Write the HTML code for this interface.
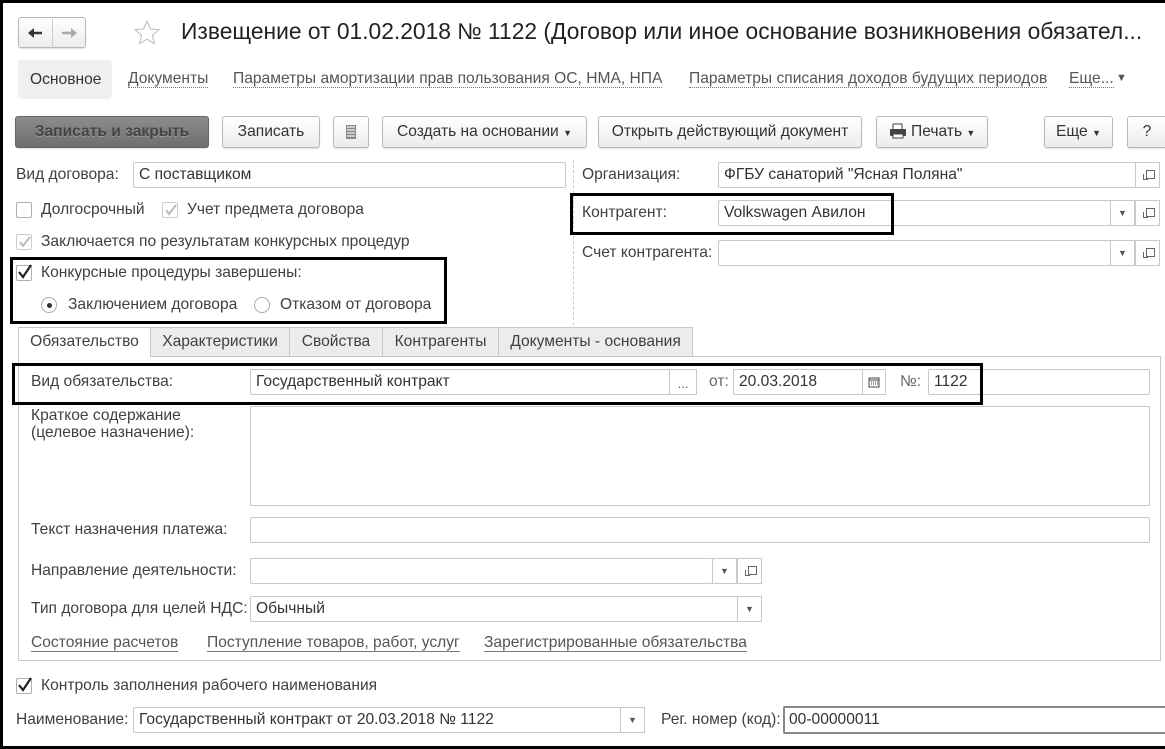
<!DOCTYPE html>
<html><head><meta charset="utf-8">
<style>
*{box-sizing:border-box;margin:0;padding:0}
body{width:1165px;height:749px;overflow:hidden;background:#fff;font-family:"Liberation Sans",Arial,sans-serif;font-size:15.6px;color:#404040;position:relative}
.a{position:absolute;white-space:nowrap}
.frame{position:absolute;left:0;top:0;width:1168px;height:749px;border:3px solid #000;border-right:none}
.inp{position:absolute;border:1px solid #c8c8c8;border-radius:2px;background:#fff;height:26px;line-height:24px;padding-left:5px;color:#333;white-space:nowrap;overflow:hidden}
.btn{position:absolute;border:1px solid #b8b8b8;border-radius:3px;background:linear-gradient(#fff,#ececec);height:32px;line-height:30px;text-align:center;color:#333;white-space:nowrap;box-shadow:0 1px 1px rgba(0,0,0,.12)}
.dd{position:absolute;width:25px;height:26px;border:1px solid #c8c8c8;background:#fff;font-size:9px;line-height:24px;text-align:center;color:#555}
.cp{position:absolute;width:25px;height:26px;border:1px solid #c8c8c8;background:#fff}
.cp:before{content:"";position:absolute;left:10px;top:7px;width:7px;height:7px;border:1px solid #666;background:#fff}
.cp:after{content:"";position:absolute;left:7px;top:11px;width:4px;height:5px;border-left:1px solid #666;border-bottom:1px solid #666}
.cb{position:absolute;width:16px;height:16px;border:1px solid #b0b0b0;border-radius:2px;background:#fff}
.blk{position:absolute;border:3px solid #000}
.lnk{position:absolute;white-space:nowrap;color:#555;border-bottom:1px solid #777;line-height:16px}
.dl{position:absolute;white-space:nowrap;color:#555;border-bottom:1px dotted #777;line-height:16px}
.tab{position:absolute;top:327px;height:30px;border:1px solid #c8c8c8;background:#ececec;line-height:28px;text-align:center;color:#404040}
</style></head><body>
<div class="frame"></div>

<div class="btn" style="left:18px;top:17px;width:68px;height:31px"></div>
<div class="a" style="left:52px;top:19px;width:1px;height:27px;background:#ccc"></div>
<svg class="a" style="left:26px;top:26px" width="20" height="14"><path d="M3 7h13" stroke="#333" stroke-width="2.5"/><path d="M2 7l6-5v10z" fill="#333"/></svg>
<svg class="a" style="left:59px;top:26px" width="20" height="14"><path d="M3 7h13" stroke="#aaa" stroke-width="2.5"/><path d="M18 7l-6-5v10z" fill="#aaa"/></svg>
<svg class="a" style="left:133px;top:19px" width="28" height="28"><path d="M14 2l3.4 8 8.6.7-6.6 5.6 2 8.4L14 20.2 6.6 24.7l2-8.4L2 10.7l8.6-.7z" fill="none" stroke="#bbb" stroke-width="1"/></svg>
<div class="a" style="left:181px;top:18px;font-size:22.8px;color:#222">Извещение от 01.02.2018 № 1122 (Договор или иное основание возникновения обязател...</div>

<div class="a" style="left:18px;top:60px;width:94px;height:39px;background:#efefef;border-radius:4px"></div>
<div class="a" style="left:30px;top:71px;color:#333">Основное</div>
<div class="dl" style="left:128px;top:71px">Документы</div>
<div class="dl" style="left:233px;top:71px">Параметры амортизации прав пользования ОС, НМА, НПА</div>
<div class="dl" style="left:689px;top:71px">Параметры списания доходов будущих периодов</div>
<div class="dl" style="left:1069px;top:71px">Еще...</div>
<div class="a" style="left:1116px;top:72px;font-size:11px;color:#555">▼</div>

<div class="btn" style="left:15px;top:116px;width:194px;background:linear-gradient(#8d8d8d,#6e6e6e);border-color:#666;color:#444;font-weight:bold;text-shadow:0 1px 0 #999">Записать и закрыть</div>
<div class="btn" style="left:222px;top:116px;width:98px">Записать</div>
<div class="btn" style="left:333px;top:116px;width:36px"><div style="position:absolute;left:12px;top:8px;width:10px;height:14px;border:1px solid #888;background:repeating-linear-gradient(#ccc 0 2px,#888 2px 3px)"></div></div>
<div class="btn" style="left:382px;top:116px;width:205px">Создать на основании <span style="font-size:9px">▼</span></div>
<div class="btn" style="left:598px;top:116px;width:264px">Открыть действующий документ</div>
<div class="btn" style="left:876px;top:116px;width:112px"><svg style="vertical-align:-3px" width="18" height="16"><rect x="4" y="1" width="9" height="6" fill="#fff" stroke="#444"/><rect x="1" y="6" width="16" height="7" rx="1" fill="#444"/><rect x="4" y="11" width="10" height="4" fill="#fff" stroke="#444"/></svg> Печать <span style="font-size:9px">▼</span></div>
<div class="btn" style="left:1044px;top:116px;width:69px">Еще <span style="font-size:9px">▼</span></div>
<div class="btn" style="left:1127px;top:116px;width:40px">?</div>

<div class="a" style="left:16px;top:166px">Вид договора:</div>
<div class="inp" style="left:133px;top:162px;width:433px">С поставщиком</div>
<div class="cb" style="left:16px;top:202px"></div>
<div class="a" style="left:41px;top:201px">Долгосрочный</div>
<div class="cb" style="left:162px;top:202px;border-color:#ccc"></div>
<svg class="a" style="left:164px;top:203px" width="14" height="14"><path d="M2 7l3 4 7-9" stroke="#bbb" stroke-width="2" fill="none"/></svg>
<div class="a" style="left:187px;top:201px">Учет предмета договора</div>
<div class="cb" style="left:16px;top:234px;border-color:#ccc"></div>
<svg class="a" style="left:18px;top:235px" width="14" height="14"><path d="M2 7l3 4 7-9" stroke="#bbb" stroke-width="2" fill="none"/></svg>
<div class="a" style="left:41px;top:233px">Заключается по результатам конкурсных процедур</div>
<div class="blk" style="left:10px;top:257px;width:437px;height:67px"></div>
<div class="cb" style="left:16px;top:265px"></div>
<svg class="a" style="left:17px;top:264px" width="16" height="16"><path d="M2 8l4 5 8-12" stroke="#222" stroke-width="2.2" fill="none"/></svg>
<div class="a" style="left:41px;top:264px">Конкурсные процедуры завершены:</div>
<div class="a" style="left:41px;top:297px;width:16px;height:16px;border:1px solid #aaa;border-radius:50%"></div>
<div class="a" style="left:47px;top:303px;width:5px;height:5px;background:#333;border-radius:50%"></div>
<div class="a" style="left:68px;top:296px">Заключением договора</div>
<div class="a" style="left:254px;top:297px;width:16px;height:16px;border:1px solid #aaa;border-radius:50%"></div>
<div class="a" style="left:280px;top:296px">Отказом от договора</div>

<div class="a" style="left:573px;top:160px;height:180px;border-left:1px dashed #ccc"></div>

<div class="a" style="left:582px;top:166px">Организация:</div>
<div class="inp" style="left:718px;top:162px;width:418px">ФГБУ санаторий "Ясная Поляна"</div>
<div class="cp" style="left:1135px;top:162px"></div>
<div class="a" style="left:582px;top:204px">Контрагент:</div>
<div class="inp" style="left:718px;top:200px;width:393px">Volkswagen Авилон</div>
<div class="dd" style="left:1110px;top:200px">▼</div>
<div class="cp" style="left:1135px;top:200px"></div>
<div class="blk" style="left:570px;top:193px;width:324px;height:42px"></div>
<div class="a" style="left:582px;top:244px">Счет контрагента:</div>
<div class="inp" style="left:718px;top:240px;width:393px"></div>
<div class="dd" style="left:1110px;top:240px">▼</div>
<div class="cp" style="left:1135px;top:240px"></div>

<div class="a" style="left:18px;top:356px;width:1143px;height:305px;border:1px solid #c8c8c8"></div>
<div class="tab" style="left:18px;width:133px;background:#fff;border-bottom-color:#fff">Обязательство</div>
<div class="tab" style="left:150px;width:140px">Характеристики</div>
<div class="tab" style="left:289px;width:94px">Свойства</div>
<div class="tab" style="left:382px;width:117px">Контрагенты</div>
<div class="tab" style="left:498px;width:195px">Документы - основания</div>

<div class="a" style="left:31px;top:373px">Вид обязательства:</div>
<div class="inp" style="left:250px;top:369px;width:420px">Государственный контракт</div>
<div class="dd" style="left:669px;top:369px;width:28px;font-size:13px;line-height:28px">...</div>
<div class="a" style="left:709px;top:373px;color:#666">от:</div>
<div class="inp" style="left:733px;top:369px;width:130px">20.03.2018</div>
<div class="dd" style="left:862px;top:369px;width:24px"><svg width="12" height="12" style="margin-top:6px"><rect x="1" y="2" width="10" height="9" fill="none" stroke="#444"/><path d="M1 4h10M3 6h1M5 6h1M7 6h1M9 6h1M3 8h1M5 8h1M7 8h1M9 8h1" stroke="#444"/></svg></div>
<div class="a" style="left:900px;top:373px;color:#666">№:</div>
<div class="inp" style="left:928px;top:369px;width:222px">1122</div>
<div class="blk" style="left:12px;top:363px;width:971px;height:42px"></div>

<div class="a" style="left:31px;top:407px;line-height:17px">Краткое содержание<br>(целевое назначение):</div>
<div class="inp" style="left:250px;top:406px;width:900px;height:100px"></div>
<div class="a" style="left:31px;top:521px">Текст назначения платежа:</div>
<div class="inp" style="left:250px;top:517px;width:900px"></div>
<div class="a" style="left:31px;top:562px">Направление деятельности:</div>
<div class="inp" style="left:250px;top:558px;width:463px"></div>
<div class="dd" style="left:712px;top:558px">▼</div>
<div class="cp" style="left:737px;top:558px"></div>
<div class="a" style="left:31px;top:600px">Тип договора для целей НДС:</div>
<div class="inp" style="left:250px;top:596px;width:488px">Обычный</div>
<div class="dd" style="left:737px;top:596px">▼</div>
<div class="lnk" style="left:31px;top:635px">Состояние расчетов</div>
<div class="lnk" style="left:207px;top:635px">Поступление товаров, работ, услуг</div>
<div class="lnk" style="left:484px;top:635px">Зарегистрированные обязательства</div>

<div class="cb" style="left:16px;top:678px"></div>
<svg class="a" style="left:17px;top:677px" width="16" height="16"><path d="M2 8l4 5 8-12" stroke="#222" stroke-width="2.2" fill="none"/></svg>
<div class="a" style="left:41px;top:677px">Контроль заполнения рабочего наименования</div>
<div class="a" style="left:16px;top:711px">Наименование:</div>
<div class="inp" style="left:133px;top:707px;width:488px">Государственный контракт от 20.03.2018 № 1122</div>
<div class="dd" style="left:620px;top:707px">▼</div>
<div class="a" style="left:661px;top:711px">Рег. номер (код):</div>
<div class="inp" style="left:783px;top:706px;width:390px;height:28px;border:2px solid #888;padding-left:4px">00-00000011</div>
</body></html>
